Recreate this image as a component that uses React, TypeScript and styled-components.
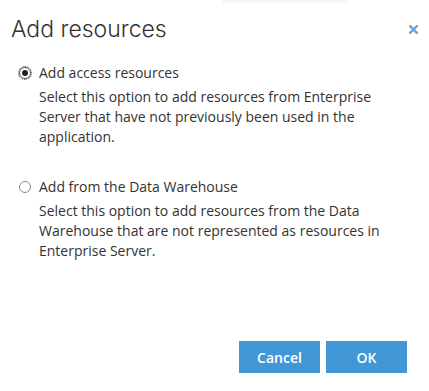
import React, { useState } from "react";
import styled, { createGlobalStyle } from "styled-components";

const Global = createGlobalStyle`
  html, body { margin: 0; padding: 0; background: #fff; }
  body { font-family: "Open Sans", "Liberation Sans", sans-serif; color: #333; }
`;

const Dialog = styled.div`
  width: 429px;
  height: 391px;
  box-sizing: border-box;
  display: flex;
  flex-direction: column;
  background: #fff;
  position: relative;
`;

const TopShade = styled.div`
  position: absolute;
  top: 0;
  left: 222px;
  width: 127px;
  height: 3px;
  background: #f7f7f7;
`;

const Header = styled.div`
  display: flex;
  align-items: center;
  justify-content: space-between;
  height: 58px;
  padding: 0 10px 0 11px;
`;

const Title = styled.h1`
  margin: 0;
  font-family: "Inter", "Open Sans", sans-serif;
  font-weight: 300;
  font-size: 23px;
  letter-spacing: 0;
  color: #333;
`;

const Close = styled.button`
  border: 0;
  background: none;
  padding: 0;
  width: 12px;
  height: 12px;
  display: flex;
  align-items: center;
  justify-content: center;
  cursor: pointer;
`;

const Body = styled.div`
  display: flex;
  flex-direction: column;
  gap: 30px;
  padding: 5px 20px 0 19px;
  flex: 1;
`;

const Option = styled.div`
  display: flex;
  flex-direction: column;
`;

const LabelRow = styled.label`
  display: flex;
  align-items: center;
  gap: 8px;
  font-size: 14px;
  line-height: 20px;
  cursor: pointer;
`;

const Radio = styled.span<{ $checked: boolean; $focused?: boolean }>`
  width: 12px;
  height: 12px;
  box-sizing: border-box;
  border-radius: 50%;
  border: 1px solid ${(p) => (p.$checked ? "#555" : "#8a8a8a")};
  display: flex;
  align-items: center;
  justify-content: center;
  outline: ${(p) => (p.$focused ? "1px dotted #444" : "none")};
  outline-offset: 0px;
  &::after {
    content: "";
    width: 6px;
    height: 6px;
    border-radius: 50%;
    background: ${(p) => (p.$checked ? "#222" : "transparent")};
  }
`;

const Desc = styled.p`
  margin: 4px 0 0 20px;
  font-size: 14px;
  line-height: 20px;
  color: #333;
`;

const Footer = styled.div`
  display: flex;
  justify-content: flex-end;
  gap: 6px;
  padding: 0 22px 18px 0;
`;

const Button = styled.button`
  width: 81px;
  height: 32px;
  border: 0;
  border-radius: 0;
  background: #4196d6;
  color: #fff;
  font-family: "Open Sans", sans-serif;
  font-weight: 600;
  font-size: 14px;
  cursor: pointer;
`;

export default function App() {
  const [sel, setSel] = useState(0);
  const options = [
    {
      label: "Add access resources",
      desc: "Select this option to add resources from Enterprise Server that have not previously been used in the application.",
    },
    {
      label: "Add from the Data Warehouse",
      desc: "Select this option to add resources from the Data Warehouse that are not represented as resources in Enterprise Server.",
    },
  ];
  return (
    <>
      <Global />
      <Dialog>
        <TopShade />
        <Header>
          <Title>Add resources</Title>
          <Close aria-label="Close">
            <svg width="9" height="9" viewBox="0 0 9 9">
              <path d="M1.2 1.2 L7.8 7.8 M7.8 1.2 L1.2 7.8" stroke="#6aa6d8" strokeWidth="2.4" strokeLinecap="square" />
            </svg>
          </Close>
        </Header>
        <Body>
          {options.map((o, i) => (
            <Option key={i}>
              <LabelRow onClick={() => setSel(i)}>
                <Radio $checked={sel === i} $focused={sel === i} />
                {o.label}
              </LabelRow>
              <Desc>{o.desc}</Desc>
            </Option>
          ))}
        </Body>
        <Footer>
          <Button>Cancel</Button>
          <Button>OK</Button>
        </Footer>
      </Dialog>
    </>
  );
}
